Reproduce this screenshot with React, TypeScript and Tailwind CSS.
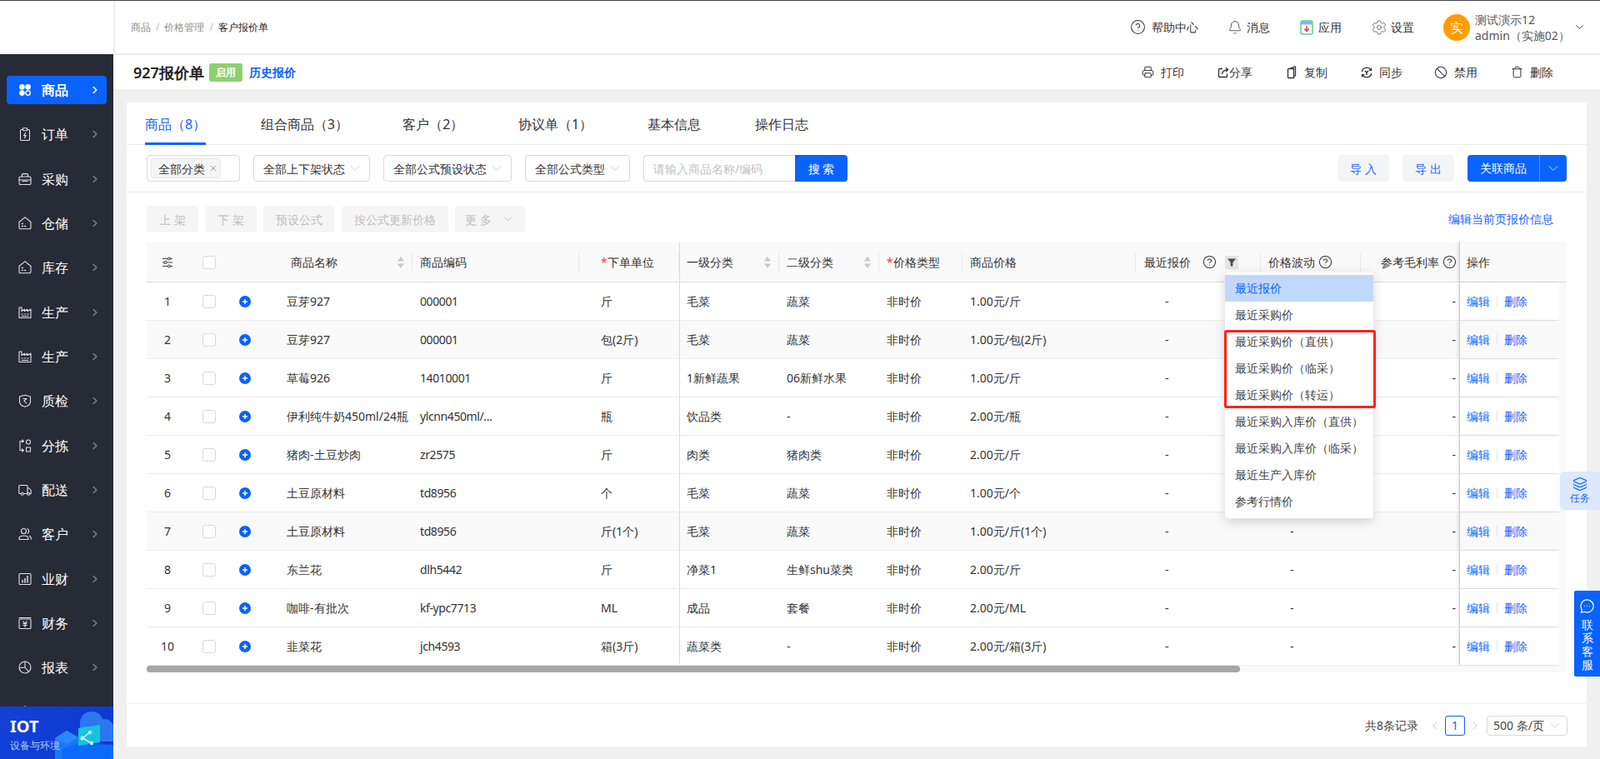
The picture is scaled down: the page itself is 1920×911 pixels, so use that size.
import { Ban, Bell, ChevronDown, ChevronLeft, ChevronRight, CircleHelp, Layers, Printer, Settings, Trash, X } from "lucide-react";
import type { ReactNode } from "react";

type Row = {
  id: number;
  name: string;
  code: string;
  unit: string;
  cat1: string;
  cat2: string;
  price: string;
};

const rows: Row[] = [
  { id: 1, name: "豆芽927", code: "000001", unit: "斤", cat1: "毛菜", cat2: "蔬菜", price: "1.00元/斤" },
  { id: 2, name: "豆芽927", code: "000001", unit: "包(2斤)", cat1: "毛菜", cat2: "蔬菜", price: "1.00元/包(2斤)" },
  { id: 3, name: "草莓926", code: "14010001", unit: "斤", cat1: "1新鲜蔬果", cat2: "06新鲜水果", price: "1.00元/斤" },
  { id: 4, name: "伊利纯牛奶450ml/24瓶", code: "ylcnn450ml/...", unit: "瓶", cat1: "饮品类", cat2: "-", price: "2.00元/瓶" },
  { id: 5, name: "猪肉-土豆炒肉", code: "zr2575", unit: "斤", cat1: "肉类", cat2: "猪肉类", price: "2.00元/斤" },
  { id: 6, name: "土豆原材料", code: "td8956", unit: "个", cat1: "毛菜", cat2: "蔬菜", price: "1.00元/个" },
  { id: 7, name: "土豆原材料", code: "td8956", unit: "斤(1个)", cat1: "毛菜", cat2: "蔬菜", price: "1.00元/斤(1个)" },
  { id: 8, name: "东兰花", code: "dlh5442", unit: "斤", cat1: "净菜1", cat2: "生鲜shu菜类", price: "2.00元/斤" },
  { id: 9, name: "咖啡-有批次", code: "kf-ypc7713", unit: "ML", cat1: "成品", cat2: "套餐", price: "2.00元/ML" },
  { id: 10, name: "韭菜花", code: "jch4593", unit: "箱(3斤)", cat1: "蔬菜类", cat2: "-", price: "2.00元/箱(3斤)" },
];

const menuItems = [
  "最近报价",
  "最近采购价",
  "最近采购价（直供）",
  "最近采购价（临采）",
  "最近采购价（转运）",
  "最近采购入库价（直供）",
  "最近采购入库价（临采）",
  "最近生产入库价",
  "参考行情价",
];

function NavIcon({ children }: { children: ReactNode }) {
  return (
    <svg viewBox="0 0 16 16" className="h-4 w-4 shrink-0" fill="none" stroke="#e2e2e4" strokeWidth="1.1" strokeLinejoin="round" strokeLinecap="round">
      {children}
    </svg>
  );
}

const warehouse = (
  <>
    <path d="M1 6.5 7.2 1.3a1.2 1.2 0 0 1 1.6 0L15 6.5v6.7a1.5 1.5 0 0 1-1.5 1.5h-11A1.5 1.5 0 0 1 1 13.2z" />
    <path d="M4.5 8.5h.9M4.5 11.5h.9M7.6 11.5h.9" strokeWidth="1.4" />
  </>
);

const factory = (
  <>
    <path d="M1 2h3v4.5l3.4-2.3v2.3l3.4-2.3v2.3L15 4.2V14.5H1z" />
    <path d="M4 10h1.3M7.4 10h1.3M10.8 10h1.3M4 12.5h8" strokeWidth="1.2" />
  </>
);

const navItems: { label: string; icon: ReactNode }[] = [
  {
    label: "商品",
    icon: (
      <>
        <circle cx="4.4" cy="4.4" r="3.3" fill="#fff" stroke="none" />
        <circle cx="11.6" cy="4.4" r="3.3" fill="#fff" stroke="none" />
        <circle cx="4.4" cy="11.6" r="3.3" fill="#fff" stroke="none" />
        <circle cx="11.6" cy="11.6" r="2.7" stroke="#fff" strokeWidth="1.4" />
      </>
    ),
  },
  {
    label: "订单",
    icon: (
      <>
        <rect x="2.5" y="2.5" width="11" height="13" rx="1.2" />
        <rect x="5.5" y="0.8" width="5" height="3" rx="0.5" fill="#272b36" />
        <path d="M8.6 6.5 6.6 9.6h2.6l-1.8 3" />
      </>
    ),
  },
  {
    label: "采购",
    icon: (
      <>
        <path d="M4.5 5V2.6a1 1 0 0 1 1-1h5a1 1 0 0 1 1 1V5" />
        <rect x="1" y="5" width="14" height="9.5" rx="1.3" />
        <path d="M1 9h14M5 10.5h6" />
      </>
    ),
  },
  { label: "仓储", icon: warehouse },
  { label: "库存", icon: warehouse },
  { label: "生产", icon: factory },
  { label: "生产", icon: factory },
  {
    label: "质检",
    icon: (
      <>
        <path d="M1.5 3 8 1.2 14.5 3v6c0 3-3 5.3-6.5 6.3C4.5 14.3 1.5 12 1.5 9z" />
        <path d="M5.8 5.5H10L6.8 8.2l3 2.6" />
      </>
    ),
  },
  {
    label: "分拣",
    icon: (
      <>
        <path d="M6 2.5H2v11h4M4.5.8l1.900 1.700L4.500 4.200M4.500 11.800l1.900 1.700-1.900 1.700" />
        <circle cx="12" cy="3.500" r="2.500" />
        <rect x="9.500" y="10" width="5" height="5" />
      </>
    ),
  },
  {
    label: "配送",
    icon: (
      <>
        <path d="M3 12.500H1.800a1 1 0 0 1-1-1V3.500a1 1 0 0 1 1-1H10a1 1 0 0 1 1 1v9H6.500M11 6h2l2.200 2.500v4H14" />
        <circle cx="4.800" cy="12.800" r="1.500" />
        <circle cx="12.300" cy="12.800" r="1.500" />
      </>
    ),
  },
  {
    label: "客户",
    icon: (
      <>
        <circle cx="6.500" cy="4.500" r="3" />
        <path d="M1 14.500v-1.300c0-2 2-3.200 5.500-3.200s5.500 1.200 5.500 3.200v1.300zM11 1.800a3 3 0 0 1 0 5.400M13.500 10.300c1 .5 1.700 1.500 1.700 2.700v1.200" />
      </>
    ),
  },
  {
    label: "业财",
    icon: (
      <>
        <rect x="1" y="1.500" width="14" height="13" rx="1.300" />
        <path d="M5 12V9.500M8 12V7.500M11 12V4.500" strokeWidth="1.500" />
      </>
    ),
  },
  {
    label: "财务",
    icon: (
      <>
        <rect x="1" y="3" width="14" height="11.500" rx="1" />
        <path d="M1 1.500h14M5.800 6 8 8.300 10.200 6M5.800 8.500h4.400M5.800 10.500h4.400M8 8.300v4.200" />
      </>
    ),
  },
  {
    label: "报表",
    icon: (
      <>
        <circle cx="8" cy="8" r="7" />
        <path d="M8 1v7l4.500 5.500M8 8l-6.500.5" />
      </>
    ),
  },
  { label: "工作台", icon: warehouse },
];

function SortIcon() {
  return (
    <svg viewBox="0 0 10 16" className="h-4 w-[10px] shrink-0" fill="#c8c8c8">
      <path d="M5 1 9 6.500H1z" />
      <path d="M5 15 1 9.500h8z" />
    </svg>
  );
}

function Sep() {
  return <i className="ml-auto h-[23px] w-px shrink-0 bg-[#e9e9e9]" />;
}

function Required({ children }: { children: ReactNode }) {
  return (
    <span>
      <span className="text-[#ff3b30]">*</span>
      {children}
    </span>
  );
}

function SelectBox({ label, width }: { label: string; width: string }) {
  return (
    <div className={`flex h-8 items-center rounded-[4px] border border-[#d9d9d9] pl-[11px] pr-[7px] text-[14px] text-[#333] ${width}`}>
      <span>{label}</span>
      <ChevronDown className="ml-auto h-[20px] w-[20px] text-[#bfbfbf]" strokeWidth={0.9} />
    </div>
  );
}

function DisabledButton({ label, width, more }: { label: string; width: string; more?: boolean }) {
  return (
    <div className={`flex h-8 items-center justify-center gap-3 rounded-[4px] bg-[#f5f5f5] text-[14px] text-[#bfbfbf] ${width}`}>
      <span>{label}</span>
      {more ? <ChevronDown className="h-4 w-4 text-[#bfbfbf]" strokeWidth={1.3} /> : null}
    </div>
  );
}

function TopLink({ icon, label, gap }: { icon: ReactNode; label: string; gap: string }) {
  return (
    <div className={`flex items-center text-[14px] text-[#333] ${gap}`}>
      {icon}
      <span>{label}</span>
    </div>
  );
}

const gridCols = "grid-cols-[50px_50px_36px_183px_200px_120px_120px_120px_100px_208px_150px_120px_118px_120px]";
const headCols = "grid-cols-[50px_50px_36px_183px_200px_120px_120px_120px_100px_208px_150px_120px_118px_129px]";

export default function App() {
  return (
    <div className="relative flex h-[911px] w-[1920px] overflow-hidden border-t border-[#444] bg-[#f0f0f0] font-['Noto_Sans','Noto_Sans_CJK_SC',sans-serif]">
      <div className="flex w-[136px] shrink-0 flex-col">
        <div className="h-16 bg-white" />
        <div className="relative flex-1 overflow-hidden bg-[#272b36] pt-[16.5px]">
          {navItems.map((item, index) => (
            <div key={index} className="flex h-[53.33px] items-center">
              <div className={`mx-2 flex h-[34px] w-[120px] items-center rounded-[4px] pl-[14px] pr-[7px] text-[16px] text-white ${index === 0 ? "bg-[#0a62ff] font-semibold" : ""}`}>
                <NavIcon>{item.icon}</NavIcon>
                <span className="ml-3">{item.label}</span>
                <ChevronRight className={`ml-auto h-[14px] w-[14px] ${index === 0 ? "text-white" : "text-[#7b7e86]"}`} strokeWidth={2.8} />
              </div>
            </div>
          ))}
          <div className="absolute bottom-0 left-0 h-[63px] w-[136px] overflow-hidden bg-gradient-to-r from-[#1240d8] to-[#0d3ad0]">
            <svg viewBox="0 0 136 63" className="absolute inset-0 h-full w-full">
              <circle cx="110" cy="20" r="14" fill="#2b78ee" />
              <circle cx="126" cy="25" r="10" fill="#2b78ee" />
              <rect x="96" y="22" width="40" height="20" fill="#2b78ee" />
              <path d="M66 38 80 29l14 8v26H66z" fill="#1a78f5" />
              <path d="M66 38 80 29l14 8-14 8z" fill="#2a8afa" />
              <path d="M75 63V50l20-6 41 2v17z" fill="#0a6bfa" />
              <path d="M94 26l26-4v21l-26 4z" fill="#14c4de" />
              <path d="M108 31 99 38l11 6" fill="none" stroke="#cfeff7" strokeWidth="1.500" />
              <circle cx="108" cy="31" r="2.200" fill="#cfeff7" />
              <circle cx="99" cy="38" r="2.500" fill="#cfeff7" />
              <circle cx="110" cy="44" r="2.200" fill="#cfeff7" />
            </svg>
            <div className="relative pl-3 pt-[10px]">
              <div className="text-[20px] font-bold leading-[28px] text-white">IOT</div>
              <div className="mt-[1px] text-[12px] leading-[16px] text-[#b6c9f5]">设备与环境</div>
            </div>
          </div>
        </div>
      </div>

      <div className="flex min-w-0 flex-1 flex-col">
        <div className="flex h-[65px] shrink-0 items-center border-b-2 border-l-2 border-[#e8edf3] bg-white pl-[19px]">
          <div className="flex items-center text-[12px] text-[#8c8c8c]">
            <span>商品</span>
            <span className="mx-[6px] text-[#c0c0c0]">/</span>
            <span>价格管理</span>
            <span className="mx-[6px] text-[#c0c0c0]">/</span>
            <span className="text-[#222]">客户报价单</span>
          </div>
          <div className="ml-auto flex items-center">
            <TopLink gap="gap-[7px]" label="帮助中心" icon={<CircleHelp className="h-[19px] w-[19px] text-[#333]" strokeWidth={1.3} />} />
            <TopLink gap="ml-[35px] gap-[5px]" label="消息" icon={<Bell className="h-[18px] w-[18px] text-[#555]" strokeWidth={1.3} />} />
            <TopLink
              gap="ml-[36px] gap-[6px]"
              label="应用"
              icon={
                <svg viewBox="0 0 16 18" className="h-[18px] w-4">
                  <rect x="1" y="1" width="14" height="16" rx="2" fill="#fff" stroke="#5fd08a" strokeWidth="1.500" />
                  <rect x="1.500" y="1.500" width="13" height="4" fill="#7cb4f5" />
                  <path d="M8 7v6M5.300 10.500 8 13.500l2.700-3" fill="none" stroke="#f0405a" strokeWidth="1.600" />
                </svg>
              }
            />
            <TopLink gap="ml-[35px] gap-[4px]" label="设置" icon={<Settings className="h-5 w-5 text-[#666]" strokeWidth={1.1} />} />
            <div className="ml-[35px] flex h-8 w-8 items-center justify-center rounded-full bg-[#ff9d00] text-[16px] text-white">实</div>
            <div className="ml-[6px] w-[117px] text-[14px] leading-[19px] text-[#555]">
              <div>测试演示12</div>
              <div>admin（实施02）</div>
            </div>
            <ChevronDown className="ml-[1px] mr-[17px] h-[15px] w-[15px] text-[#444]" strokeWidth={1.6} />
          </div>
        </div>

        <div className="flex h-[41px] shrink-0 items-center bg-white pl-[24px]">
          <span className="text-[18px] font-semibold leading-[24px] text-[#222]">927报价单</span>
          <span className="ml-[6px] flex h-[22px] w-10 items-center justify-center rounded-[3px] bg-[#8ed06f] text-[12px] font-semibold text-white">启用</span>
          <span className="ml-2 text-[14px] font-semibold text-[#0a62ff]">历史报价</span>
          <div className="ml-auto flex items-center pr-[56px] text-[14px] text-[#333]">
            <div className="flex items-center gap-2">
              <Printer className="h-[15px] w-[15px]" strokeWidth={1.6} />
              <span>打印</span>
            </div>
            <div className="ml-[40px] flex items-center">
              <svg viewBox="0 0 14 14" className="h-[14px] w-[14px]" fill="none" stroke="#333" strokeWidth="1.300">
                <path d="M6 2.500H2.500a1 1 0 0 0-1 1v8a1 1 0 0 0 1 1h8a1 1 0 0 0 1-1V8.500M5.500 9c.3-3 2.500-5 7-5.500M10 1.200l2.700 2.300L10 6" />
              </svg>
              <span>分享</span>
            </div>
            <div className="ml-[41px] flex items-center gap-[9px]">
              <svg viewBox="0 0 12 16" className="h-4 w-3" fill="none" stroke="#333" strokeWidth="1.300">
                <path d="M2.500 3.500h6v11h-6a1 1 0 0 1-1-1v-9a1 1 0 0 1 1-1zM3 3.500l6.500-2.300h1v10.500l-2 1.500" />
              </svg>
              <span>复制</span>
            </div>
            <div className="ml-[40px] flex items-center gap-2">
              <svg viewBox="0 0 14 14" className="h-[14px] w-[14px]" fill="none" stroke="#333" strokeWidth="1.300">
                <path d="M1.200 6A6 6 0 0 1 12 3.800M12.800 8A6 6 0 0 1 2 10.200M12.500 1.500v2.800H9.800M1.500 12.500V9.700h2.700" />
                <path d="M5 5l2 2 2-2M7 7v3" strokeWidth="1.500" />
              </svg>
              <span>同步</span>
            </div>
            <div className="ml-[38px] flex items-center gap-2">
              <Ban className="h-4 w-4" strokeWidth={1.6} />
              <span>禁用</span>
            </div>
            <div className="ml-[40px] flex items-center gap-2">
              <Trash className="h-[15px] w-[15px]" strokeWidth={1.6} />
              <span>删除</span>
            </div>
          </div>
        </div>

        <div className="flex-1 px-4 pb-[15px] pt-4">
          <div className="flex h-[773px] flex-col bg-white">
            <div className="flex h-[51px] shrink-0 gap-[65.5px] border-b border-[#ececec] pl-[22px] pt-[2px] text-[16px] text-[#333]">
              <div className="relative flex items-center text-[#0a62ff]">
                <span>商品（8）</span>
                <i className="absolute bottom-[-1px] left-0 h-[3px] w-full rounded-t-[1px] bg-[#0a62ff]" />
              </div>
              <div className="flex items-center">组合商品（3）</div>
              <div className="flex items-center">客户（2）</div>
              <div className="flex items-center">协议单（1）</div>
              <div className="flex items-center">基本信息</div>
              <div className="flex items-center">操作日志</div>
            </div>

            <div className="flex h-[57px] shrink-0 items-center gap-4 border-b border-[#ececec] px-6">
              <div className="flex h-8 w-[112px] items-center rounded-[4px] border border-[#d9d9d9] pl-1">
                <div className="flex h-[24px] w-[84px] items-center rounded-[3px] border border-[#e8e8e8] bg-[#f5f5f5] pl-2 text-[14px] text-[#333]">
                  <span>全部分类</span>
                  <X className="ml-[4px] h-[12px] w-[12px] text-[#888]" strokeWidth={1.5} />
                </div>
              </div>
              <SelectBox label="全部上下架状态" width="w-[140px]" />
              <SelectBox label="全部公式预设状态" width="w-[154px]" />
              <SelectBox label="全部公式类型" width="w-[126px]" />
              <div className="flex h-8 w-[245px]">
                <input
                  readOnly
                  placeholder="请输入商品名称/编码"
                  className="h-full w-[182px] rounded-l-[4px] border border-r-0 border-[#d9d9d9] pl-[11px] text-[14px] outline-none placeholder:text-[#bfbfbf]"
                />
                <div className="flex h-full w-[63px] items-center justify-center rounded-r-[4px] bg-[#0a62ff] text-[14px] font-medium text-white">搜 索</div>
              </div>
              <div className="ml-auto flex h-8 w-[62px] items-center justify-center rounded-[4px] bg-[#f2f4f7] text-[14px] text-[#1366ff]">导 入</div>
              <div className="flex h-8 w-[62px] items-center justify-center rounded-[4px] bg-[#f2f4f7] text-[14px] text-[#1366ff]">导 出</div>
              <div className="flex h-8 w-[119px] items-center rounded-[4px] bg-[#0a62ff] text-[14px] text-white">
                <span className="w-[87px] border-r border-[#5a94ff] text-center leading-[32px]">关联商品</span>
                <ChevronDown className="ml-[6px] h-[20px] w-[20px]" strokeWidth={1} />
              </div>
            </div>

            <div className="flex h-[60px] shrink-0 items-start gap-2 px-6 pt-4">
              <DisabledButton label="上 架" width="w-[62px]" />
              <DisabledButton label="下 架" width="w-[62px]" />
              <DisabledButton label="预设公式" width="w-[86px]" />
              <DisabledButton label="按公式更新价格" width="w-[128px]" />
              <DisabledButton label="更 多" width="w-[84px]" more />
              <span className="ml-auto pr-4 text-[14px] leading-[32px] text-[#1366ff]">编辑当前页报价信息</span>
            </div>

            <div className="relative mx-6 w-[1704px] text-[14px] text-[#333]">
              <div className={`grid h-[48px] ${headCols} border-b border-[#dcdcdc] bg-[#f9f9f9]`}>
                <div className="flex items-center justify-center">
                  <svg viewBox="0 0 14 14" className="h-[14px] w-[14px]" fill="none" stroke="#444" strokeWidth="1.100">
                    <path d="M1 2.500h6.500M10.500 2.500H13M1 7h2M6 7h7M1 11.500h6.500M10.500 11.500H13" />
                    <circle cx="9" cy="2.500" r="1.500" />
                    <circle cx="4.500" cy="7" r="1.500" />
                    <circle cx="9" cy="11.500" r="1.500" />
                  </svg>
                </div>
                <div className="flex items-center justify-center">
                  <i className="h-4 w-4 rounded-[3px] border border-[#d9d9d9] bg-white" />
                </div>
                <div />
                <div className="flex items-center gap-2 pl-[37px]">
                  <span>商品名称</span>
                  <span className="ml-auto"><SortIcon /></span>
                  <i className="h-[23px] w-px bg-[#e9e9e9]" />
                </div>
                <div className="flex items-center pl-[9px]">
                  <span>商品编码</span>
                  <Sep />
                </div>
                <div className="flex items-center pl-[26px]">
                  <Required>下单单位</Required>
                  <Sep />
                </div>
                <div className="flex items-center gap-2 border-l border-[#d9d9d9] pl-2">
                  <span>一级分类</span>
                  <span className="ml-auto"><SortIcon /></span>
                  <i className="h-[23px] w-px bg-[#e9e9e9]" />
                </div>
                <div className="flex items-center gap-2 pl-[9px]">
                  <span>二级分类</span>
                  <span className="ml-auto"><SortIcon /></span>
                  <i className="h-[23px] w-px bg-[#e9e9e9]" />
                </div>
                <div className="flex items-center pl-[9px]">
                  <Required>价格类型</Required>
                  <Sep />
                </div>
                <div className="flex items-center pl-[9px]">
                  <span>商品价格</span>
                  <Sep />
                </div>
                <div className="flex items-center pl-[10px]">
                  <span>最近报价</span>
                  <CircleHelp className="ml-[14px] h-[17px] w-[17px] text-[#333]" strokeWidth={1.5} />
                  <span className="ml-[10px] flex h-4 w-4 items-center justify-center bg-[#e4e4e4]">
                    <svg viewBox="0 0 10 10" className="h-[10px] w-[10px]" fill="#4a4a4a">
                      <path d="M0 .5h10L6.300 5v4.500H3.700V5z" />
                    </svg>
                  </span>
                  <Sep />
                </div>
                <div className="flex items-center pl-[9px]">
                  <span>价格波动</span>
                  <CircleHelp className="ml-[4px] h-[17px] w-[17px] text-[#333]" strokeWidth={1.5} />
                  <Sep />
                </div>
                <div className="flex items-center pl-6">
                  <span>参考毛利率</span>
                  <CircleHelp className="ml-[4px] h-[17px] w-[17px] text-[#333]" strokeWidth={1.5} />
                </div>
                <div className="flex items-center border-l border-[#c8c8c8] pl-2 shadow-[-2px_0_3px_rgba(0,0,0,0.08)]">操作</div>
              </div>

              <div className="flex">
                <div className="w-[1695px]">
                  {rows.map((row) => (
                    <div key={row.id} className={`grid h-[46px] ${gridCols} border-b border-[#ececec] ${row.id === 2 || row.id === 7 ? "bg-[#f9f9f9]" : "bg-white"}`}>
                      <div className="flex items-center justify-center">{row.id}</div>
                      <div className="flex items-center justify-center">
                        <i className="h-4 w-4 rounded-[3px] border border-[#d9d9d9] bg-white" />
                      </div>
                      <div className="flex items-center pl-[11px]">
                        <svg viewBox="0 0 14 14" className="h-[14px] w-[14px]">
                          <circle cx="7" cy="7" r="7" fill="#0a62ff" />
                          <path d="M4 7h6M7 4v6" stroke="#fff" strokeWidth="1.500" />
                        </svg>
                      </div>
                      <div className="flex items-center pl-8">{row.name}</div>
                      <div className="flex items-center pl-[9px] tracking-[-0.4px]">{row.code}</div>
                      <div className="flex items-center pl-[26px]">{row.unit}</div>
                      <div className="flex items-center border-l border-[#d9d9d9] pl-2">{row.cat1}</div>
                      <div className="flex items-center pl-[9px]">{row.cat2}</div>
                      <div className="flex items-center pl-[9px]">非时价</div>
                      <div className="flex items-center pl-[9px]">{row.price}</div>
                      <div className="flex items-center pl-[35px]">-</div>
                      {/* the filter menu covers this column on rows 1-6 */}
                      <div className="flex items-center pl-[35px]">{row.id > 6 ? "-" : null}</div>
                      <div className="flex items-center justify-end pr-[4px]">-</div>
                      <div className="flex items-center border-l border-[#c8c8c8] pl-2 text-[#1366ff] shadow-[-2px_0_3px_rgba(0,0,0,0.08)]">
                        <span>编辑</span>
                        <i className="mx-2 h-[13px] w-px bg-[#e4e4e4]" />
                        <span>删除</span>
                      </div>
                    </div>
                  ))}
                </div>
                <div className="w-[9px] rounded-br-[4px] bg-[#f9f9f9]" />
              </div>

              <div className="h-2 rounded-b-[4px] bg-[#f9f9f9]">
                <div className="h-2 w-[1312px] rounded-full bg-[#a6a6a6]" />
              </div>

              <div className="absolute left-[1294px] top-[35px] w-[178px] rounded-[4px] bg-white py-1 text-[14px] shadow-[0_4px_14px_rgba(0,0,0,0.16)]">
                {menuItems.map((item, index) => (
                  <div key={item} className={`flex h-8 items-center whitespace-nowrap pb-[2px] pl-3 ${index === 0 ? "bg-[#c1d8fd] text-[#0a62ff]" : "text-[#444]"}`}>
                    {item}
                  </div>
                ))}
                <div className="absolute left-[-1px] top-[70px] h-[94px] w-[182px] rounded-[3px] border-[3px] border-[#ff2116]" />
              </div>
            </div>

            <div className="mt-auto flex h-[52px] shrink-0 items-center border-t border-[#f0f0f0] pr-[23px] text-[14px] text-[#444]">
              <span className="ml-auto">共8条记录</span>
              <ChevronLeft className="ml-[12px] h-[16px] w-[16px] text-[#c8c8c8]" strokeWidth={1.3} />
              <span className="ml-1 flex h-6 w-6 items-center justify-center rounded-[3px] border border-[#0a62ff] text-[#0a62ff]">1</span>
              <ChevronRight className="ml-1 h-[16px] w-[16px] text-[#c8c8c8]" strokeWidth={1.3} />
              <div className="ml-[6px] flex h-6 w-[97px] items-center rounded-[4px] border border-[#d9d9d9] pl-[7px] pr-[5px]">
                <span>500 条/页</span>
                <ChevronDown className="ml-auto h-[18px] w-[18px] text-[#c0c0c0]" strokeWidth={1} />
              </div>
            </div>
          </div>
        </div>
      </div>

      <div className="absolute right-0 top-[565px] flex h-[46px] w-[48px] flex-col items-center justify-center rounded-l-[6px] bg-[#dce8fd] text-[#1366ff]">
        <Layers className="h-[18px] w-[18px]" strokeWidth={1.6} />
        <span className="text-[12px] leading-[16px]">任务</span>
      </div>

      <div className="absolute right-0 top-[708px] flex h-[103px] w-[31px] flex-col items-center rounded-l-[2px] bg-[#0a62ff] pt-[10px] text-[14px] leading-[16px] text-white">
        <svg viewBox="0 0 18 18" className="mb-[6px] h-[17px] w-[17px]" fill="none" stroke="#fff" strokeWidth="1.300">
          <path d="M9 1a8 8 0 1 1-3.400 15.200L1.500 17l1-3.400A8 8 0 0 1 9 1z" />
          <path d="M5.500 9h.8M8.600 9h.8M11.700 9h.8" strokeWidth="1.500" />
        </svg>
        <span>联</span>
        <span>系</span>
        <span>客</span>
        <span>服</span>
      </div>
    </div>
  );
}
